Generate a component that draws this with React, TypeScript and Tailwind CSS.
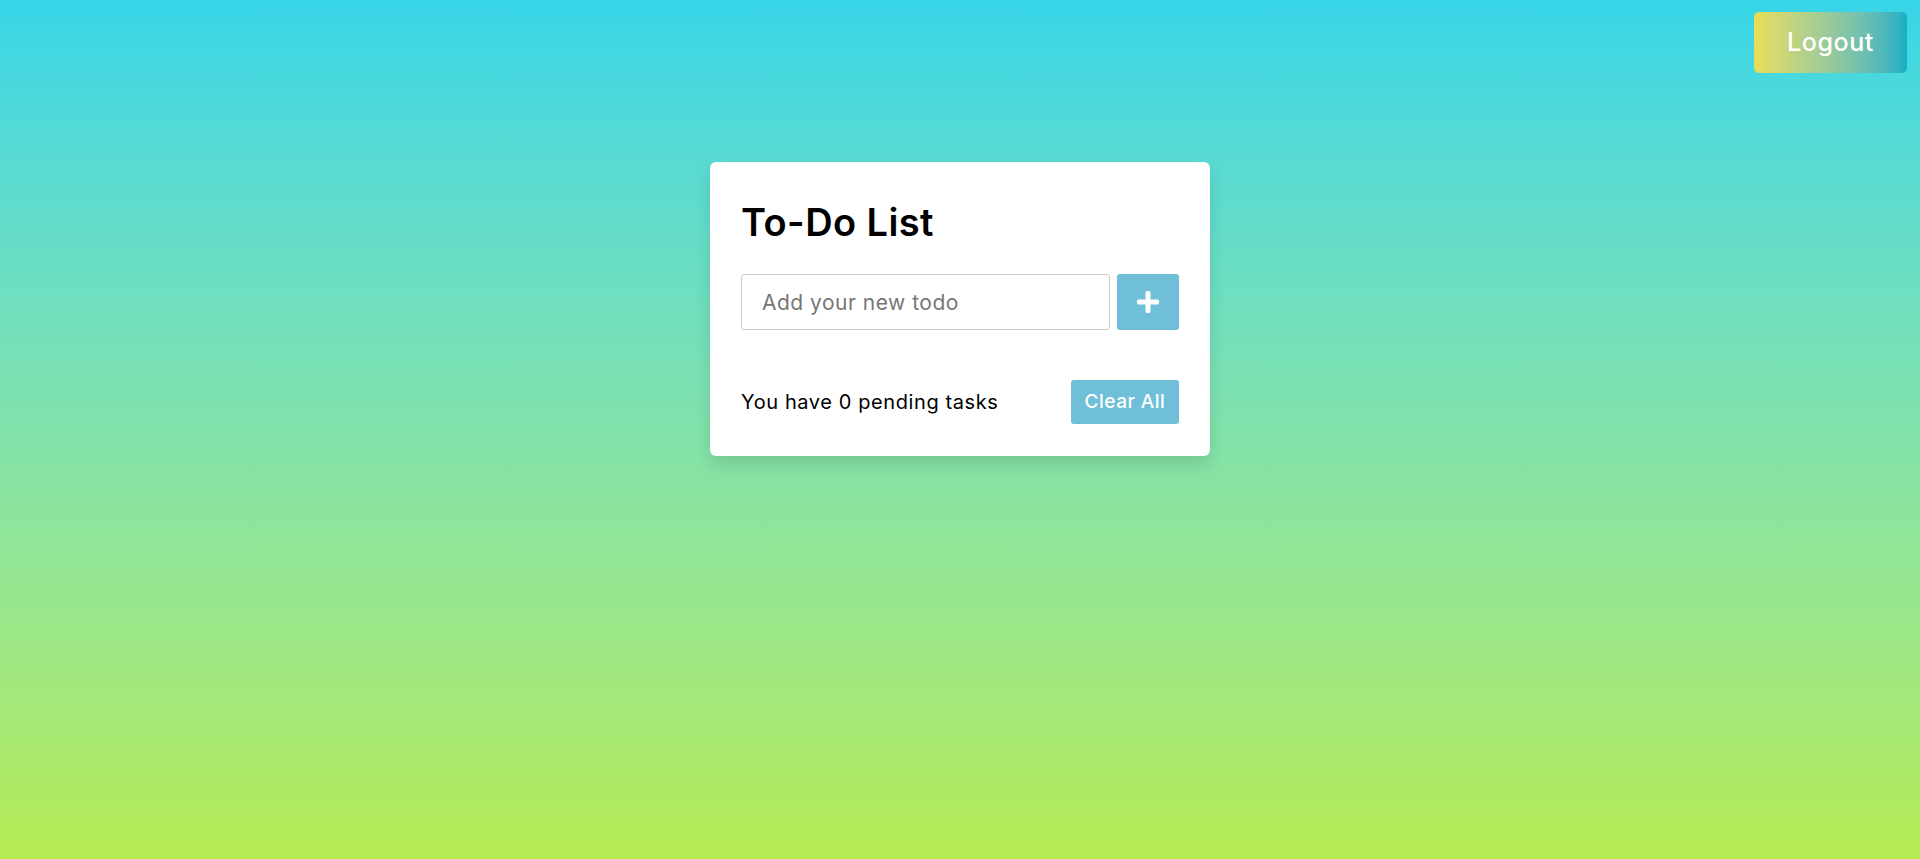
import React from "react";

export default function App() {
  return (
    <div
      className="relative min-h-[859px] w-full bg-gradient-to-b from-[#36d5e8] to-[#b6eb50] pt-[162px]"
      style={{ fontFamily: "Inter, 'Noto Sans', sans-serif" }}
    >
      <button className="absolute right-[13px] top-[12px] flex h-[61px] w-[153px] items-center justify-center rounded-[5px] bg-gradient-to-r from-[#eadd55] to-[#0db0c5] text-[25px] font-medium tracking-[0.6px] text-white">
        Logout
      </button>

      <div className="mx-auto w-[500px] rounded-[6px] bg-white px-[31px] pb-[32px] pt-[36px] shadow-[0_8px_16px_rgba(0,0,0,0.12)]">
        <h1 className="text-[38px] font-semibold leading-[48px] tracking-[0.4px] text-black">
          To-Do List
        </h1>
        <div className="mt-[28px] flex">
          <input
            type="text"
            placeholder="Add your new todo"
            className="h-[56px] min-w-0 flex-1 rounded-[3px] border border-[#cccccc] px-[20px] text-[21px] tracking-[0.5px] text-black outline-none placeholder:text-[#777777]"
          />
          <button className="ml-[7px] flex h-[56px] w-[62px] items-center justify-center rounded-[3px] bg-[#6ebfd7]">
            <svg width="24" height="24" viewBox="0 0 24 24">
              <rect x="9.5" y="1" width="5" height="22" rx="1.5" fill="white" />
              <rect x="1" y="9.5" width="22" height="5" rx="1.5" fill="white" />
            </svg>
          </button>
        </div>
        <div className="mt-[50px] flex items-center justify-between">
          <span className="text-[20px] tracking-[0.6px] text-black">You have 0 pending tasks</span>
          <button className="h-[44px] w-[108px] rounded-[3px] bg-[#6ebfd7] text-[19px] font-medium tracking-[0.5px] text-white">
            Clear All
          </button>
        </div>
      </div>
    </div>
  );
}
